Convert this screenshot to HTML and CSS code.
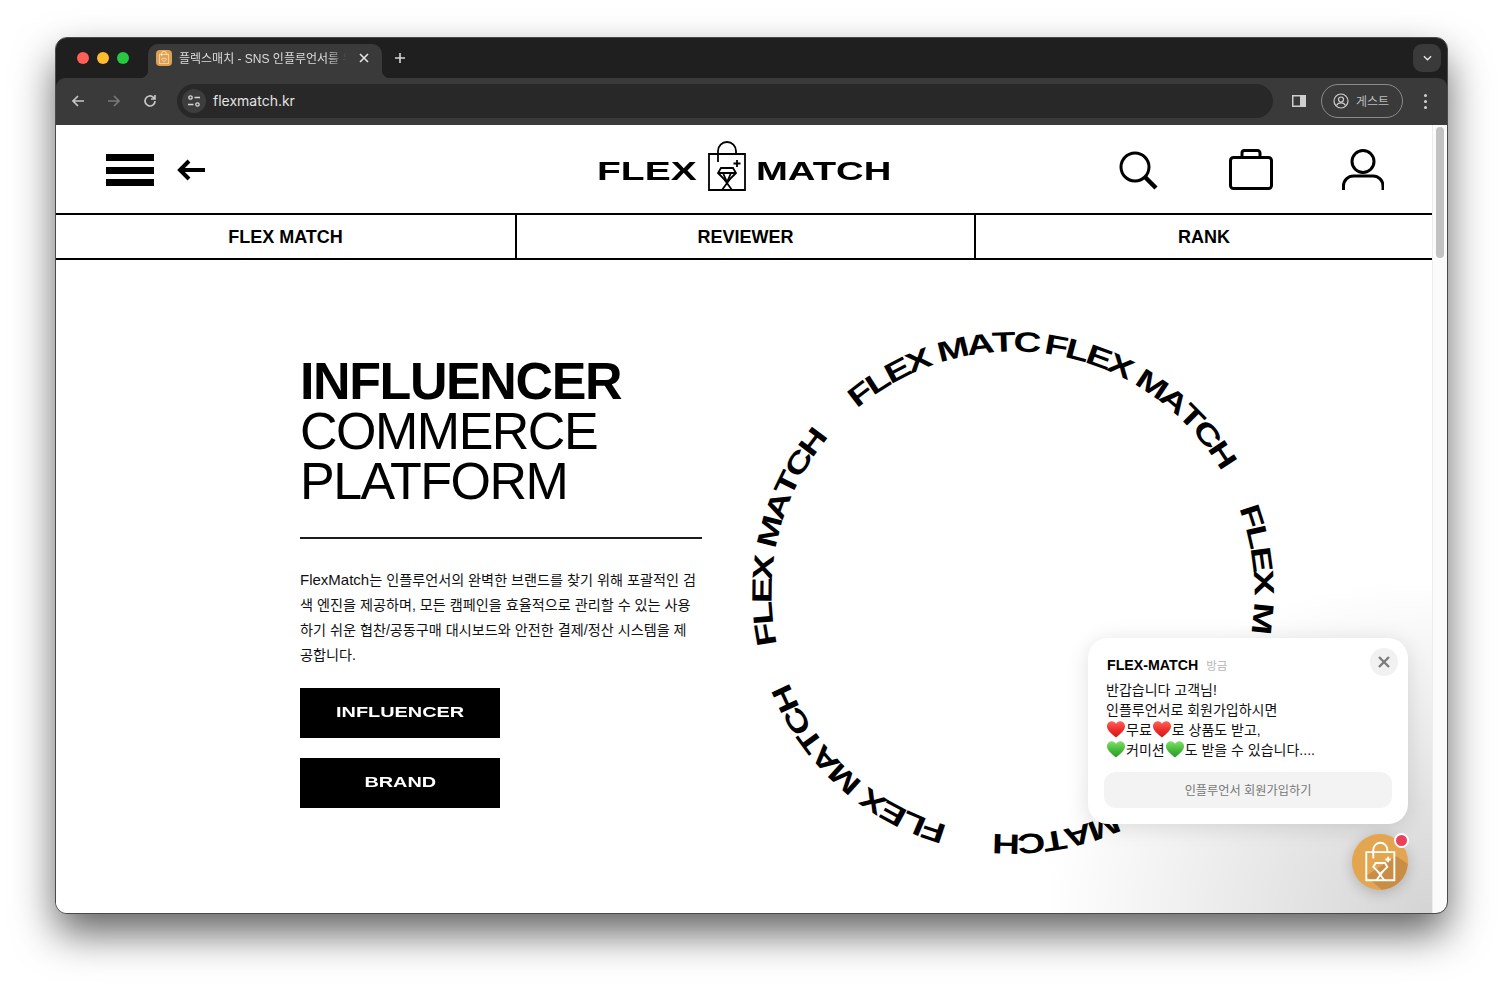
FILE: index.html
```html
<!DOCTYPE html>
<html lang="ko">
<head>
<meta charset="utf-8">
<title>FLEX MATCH</title>
<link rel="stylesheet" href="styles.css">
</head>
<body>
<svg class="defs" aria-hidden="true"><defs>
  <linearGradient id="heart-red" x1="0" y1="0" x2="0" y2="1"><stop offset="0" stop-color="#ff6257"/><stop offset=".55" stop-color="#ee2b2b"/><stop offset="1" stop-color="#c81e1e"/></linearGradient>
  <linearGradient id="heart-green" x1="0" y1="0" x2="0" y2="1"><stop offset="0" stop-color="#7ee06a"/><stop offset=".55" stop-color="#45b93a"/><stop offset="1" stop-color="#2c9a2c"/></linearGradient>
</defs></svg>
<div class="window">
  <div class="tabstrip">
    <div class="lights"><i class="light red"></i><i class="light yellow"></i><i class="light green"></i></div>
    <div class="tab">
      <span class="favicon">
        <svg viewBox="0 0 38 50" width="10" height="13" class="bag-white"><path d="M1 13H37V49H1Z"/><path d="M10 20V10a9 9 0 0 1 18 0V13"/><path d="M13 28H25L28 32 19 41 10 32Z"/></svg>
      </span>
      <span class="tab-title">플렉스매치 - SNS 인플루언서를 위한 플랫폼</span>
      <svg class="tab-close" viewBox="0 0 10 10" width="10" height="10"><path d="M1 1L9 9M9 1L1 9"/></svg>
    </div>
    <svg class="tab-plus" viewBox="0 0 12 12" width="12" height="12"><path d="M6 1V11M1 6H11"/></svg>
    <div class="tab-menu"><svg viewBox="0 0 10 6" width="9" height="6"><path d="M1 1L5 5 9 1"/></svg></div>
  </div>
  <div class="toolbar">
    <svg class="tool" viewBox="0 0 14 14" width="14" height="14"><path d="M13 7H2M7 2L2 7 7 12"/></svg>
    <svg class="tool dim" viewBox="0 0 14 14" width="14" height="14"><path d="M1 7H12M7 2L12 7 7 12"/></svg>
    <svg class="tool" viewBox="0 0 14 14" width="14" height="14"><path d="M12 7a5 5 0 1 1-1.6-3.7L12 5M12 1V5H8"/></svg>
    <div class="omnibox">
      <span class="site-icon">
        <svg viewBox="0 0 14 12" width="14" height="12"><circle cx="3.5" cy="2.5" r="1.7"/><path d="M7.5 2.5H13M1 9.5H6.5"/><circle cx="10.5" cy="9.5" r="1.7"/></svg>
      </span>
      <span class="url">flexmatch.kr</span>
    </div>
    <svg class="split" viewBox="0 0 14 12" width="14" height="12"><path class="split-frame" d="M0 0H14V12H0Z"/><path class="split-hole" d="M1.5 1.5H8V10.5H1.5Z"/></svg>
    <div class="guest">
      <svg viewBox="0 0 16 16" width="16" height="16"><circle cx="8" cy="8" r="7"/><circle cx="8" cy="6.5" r="2.5"/><path d="M3.5 12.5c1-2 2.5-2.6 4.5-2.6s3.500.6 4.500 2.600"/></svg>
      <span>게스트</span>
    </div>
    <div class="kebab"><i></i><i></i><i></i></div>
  </div>
  <div class="viewport">
    <div class="page">
      <header class="site-header">
        <div class="header-left">
          <div class="burger"><i></i><i></i><i></i></div>
          <svg class="back" viewBox="0 0 28 22" width="28" height="22"><path d="M28 11H4M12 2L3 11 12 20"/></svg>
        </div>
        <div class="logo">
          <span class="logo-word flex-word">FLEX</span>
          <svg class="logo-bag" viewBox="0 0 38 50" width="38" height="50">
            <path d="M1 13H37V49H1Z"/>
            <path d="M10 21V10a9 9 0 0 1 18 0V13"/>
            <path d="M13 27H25L28 32 19 41 10 32Z"/>
            <path d="M10 32H28M15 32L19 41 23 32M16 38L24 49M22 38L14 49M29 19V26M25.500 22.500H32.500"/>
          </svg>
          <span class="logo-word match-word">MATCH</span>
        </div>
        <div class="header-right">
          <svg class="hicon search" viewBox="0 0 40 40" width="40" height="40"><circle cx="17" cy="17" r="14"/><path d="M27 27L38 38" class="thick"/></svg>
          <svg class="hicon" viewBox="0 0 44 42" width="44" height="42"><rect x="1.500" y="8.500" width="41" height="31" rx="3"/><path d="M13 8V4a2.500 2.500 0 0 1 2.500-2.500h13A2.500 2.500 0 0 1 31 4V8"/></svg>
          <svg class="hicon" viewBox="0 0 42 42" width="42" height="42"><circle cx="21" cy="12.500" r="11"/><path d="M1.500 41V37a10 10 0 0 1 10-10H31a10 10 0 0 1 10 10V41"/></svg>
        </div>
      </header>
      <nav class="site-nav">
        <a class="nav-item">FLEX MATCH</a>
        <a class="nav-item">REVIEWER</a>
        <a class="nav-item">RANK</a>
      </nav>
      <main class="hero">
        <section class="intro">
          <h1 class="headline"><strong>INFLUENCER</strong><br>COMMERCE<br>PLATFORM</h1>
          <hr class="rule">
          <p class="lead"><span class="latin">FlexMatch</span>는 인플루언서의 완벽한 브랜드를 찾기 위해 포괄적인 검색 엔진을 제공하며, 모든 캠페인을 효율적으로 관리할 수 있는 사용하기 쉬운 협찬/공동구매 대시보드와 안전한 결제/정산 시스템을 제공합니다.</p>
          <a class="cta"><span>INFLUENCER</span></a>
          <a class="cta"><span>BRAND</span></a>
        </section>
        <svg class="ring" viewBox="-275 -275 550 550" width="550" height="550">
          <g transform="rotate(7.5)">
            <text transform="rotate(2.5) translate(0 -241.500) scale(1.38 1)">F</text><text transform="rotate(7.4) translate(0 -241.500) scale(1.38 1)">L</text><text transform="rotate(12.6) translate(0 -241.500) scale(1.38 1)">E</text><text transform="rotate(17.9) translate(0 -241.500) scale(1.38 1)">X</text><text transform="rotate(26.2) translate(0 -241.500) scale(1.38 1)">M</text><text transform="rotate(32.5) translate(0 -241.500) scale(1.38 1)">A</text><text transform="rotate(37.9) translate(0 -241.500) scale(1.38 1)">T</text><text transform="rotate(43.3) translate(0 -241.500) scale(1.38 1)">C</text><text transform="rotate(49.1) translate(0 -241.500) scale(1.38 1)">H</text>
          </g>
          <g transform="rotate(69.7)">
            <text transform="rotate(2.5) translate(0 -241.500) scale(1.38 1)">F</text><text transform="rotate(7.4) translate(0 -241.500) scale(1.38 1)">L</text><text transform="rotate(12.6) translate(0 -241.500) scale(1.38 1)">E</text><text transform="rotate(17.9) translate(0 -241.500) scale(1.38 1)">X</text><text transform="rotate(26.2) translate(0 -241.500) scale(1.38 1)">M</text>
          </g>
          <g transform="rotate(132.5)">
            <text transform="rotate(26.2) translate(0 -241.500) scale(1.38 1)">M</text><text transform="rotate(32.5) translate(0 -241.500) scale(1.38 1)">A</text><text transform="rotate(37.9) translate(0 -241.500) scale(1.38 1)">T</text><text transform="rotate(43.3) translate(0 -241.500) scale(1.38 1)">C</text><text transform="rotate(49.1) translate(0 -241.500) scale(1.38 1)">H</text>
          </g>
          <g transform="rotate(196)">
            <text transform="rotate(2.5) translate(0 -241.500) scale(1.38 1)">F</text><text transform="rotate(7.4) translate(0 -241.500) scale(1.38 1)">L</text><text transform="rotate(12.6) translate(0 -241.500) scale(1.38 1)">E</text><text transform="rotate(17.9) translate(0 -241.500) scale(1.38 1)">X</text><text transform="rotate(26.2) translate(0 -241.500) scale(1.38 1)">M</text><text transform="rotate(32.5) translate(0 -241.500) scale(1.38 1)">A</text><text transform="rotate(37.9) translate(0 -241.500) scale(1.38 1)">T</text><text transform="rotate(43.3) translate(0 -241.500) scale(1.38 1)">C</text><text transform="rotate(49.1) translate(0 -241.500) scale(1.38 1)">H</text>
          </g>
          <g transform="rotate(258)">
            <text transform="rotate(2.5) translate(0 -241.500) scale(1.38 1)">F</text><text transform="rotate(7.4) translate(0 -241.500) scale(1.38 1)">L</text><text transform="rotate(12.6) translate(0 -241.500) scale(1.38 1)">E</text><text transform="rotate(17.9) translate(0 -241.500) scale(1.38 1)">X</text><text transform="rotate(26.2) translate(0 -241.500) scale(1.38 1)">M</text><text transform="rotate(32.5) translate(0 -241.500) scale(1.38 1)">A</text><text transform="rotate(37.9) translate(0 -241.500) scale(1.38 1)">T</text><text transform="rotate(43.3) translate(0 -241.500) scale(1.38 1)">C</text><text transform="rotate(49.1) translate(0 -241.500) scale(1.38 1)">H</text>
          </g>
          <g transform="rotate(320)">
            <text transform="rotate(2.5) translate(0 -241.500) scale(1.38 1)">F</text><text transform="rotate(7.4) translate(0 -241.500) scale(1.38 1)">L</text><text transform="rotate(12.6) translate(0 -241.500) scale(1.38 1)">E</text><text transform="rotate(17.9) translate(0 -241.500) scale(1.38 1)">X</text><text transform="rotate(26.2) translate(0 -241.500) scale(1.38 1)">M</text><text transform="rotate(32.5) translate(0 -241.500) scale(1.38 1)">A</text><text transform="rotate(37.9) translate(0 -241.500) scale(1.38 1)">T</text><text transform="rotate(43.3) translate(0 -241.500) scale(1.38 1)">C</text>
          </g>
        </svg>
      </main>
      <div class="chat-glow"></div>
      <aside class="chat-card">
        <div class="chat-head"><b>FLEX-MATCH</b><span>방금</span></div>
        <button class="chat-close"><svg viewBox="0 0 12 12" width="12" height="12"><path d="M1 1L11 11M11 1L1 11"/></svg></button>
        <p class="chat-body">반갑습니다 고객님!<br>인플루언서로 회원가입하시면<br><svg class="heart" viewBox="0 0 24 22"><path fill="url(#heart-red)" d="M12 21.500C5 16 0 11.500 0 6.500 0 3 2.800 0 6.500 0 8.800 0 10.800 1.200 12 3.200 13.200 1.200 15.200 0 17.500 0 21.200 0 24 3 24 6.500 24 11.500 19 16 12 21.500Z"/></svg>무료<svg class="heart" viewBox="0 0 24 22"><path fill="url(#heart-red)" d="M12 21.500C5 16 0 11.500 0 6.500 0 3 2.800 0 6.500 0 8.800 0 10.800 1.200 12 3.200 13.200 1.200 15.200 0 17.500 0 21.200 0 24 3 24 6.500 24 11.500 19 16 12 21.500Z"/></svg>로 상품도 받고,<br><svg class="heart" viewBox="0 0 24 22"><path fill="url(#heart-green)" d="M12 21.500C5 16 0 11.500 0 6.500 0 3 2.800 0 6.500 0 8.800 0 10.800 1.200 12 3.200 13.200 1.200 15.200 0 17.500 0 21.200 0 24 3 24 6.500 24 11.500 19 16 12 21.500Z"/></svg>커미션<svg class="heart" viewBox="0 0 24 22"><path fill="url(#heart-green)" d="M12 21.500C5 16 0 11.500 0 6.500 0 3 2.800 0 6.500 0 8.800 0 10.800 1.200 12 3.200 13.200 1.200 15.200 0 17.500 0 21.200 0 24 3 24 6.500 24 11.500 19 16 12 21.500Z"/></svg>도 받을 수 있습니다....</p>
        <div class="chat-action">인플루언서 회원가입하기</div>
      </aside>
      <div class="fab">
        <svg class="fab-art" viewBox="0 0 56 56" width="56" height="56">
          <path class="fab-shadow" d="M44 22L56 30A28 28 0 0 1 30 56L14 42Z"/>
          <g class="bag-white" transform="translate(13.500 8) scale(0.78)">
            <path d="M1 13H37V49H1Z"/><path d="M10 21V10a9 9 0 0 1 18 0V13"/><path d="M13 27H25L28 32 19 41 10 32Z"/><path d="M16 38L24 49M22 38L14 49M29 19V26M25.500 22.500H32.500"/>
          </g>
        </svg>
        <i class="fab-dot"></i>
      </div>
    </div>
    <div class="scrollbar"><i></i></div>
  </div>
</div>
</body>
</html>
```
FILE: styles.css
```css
* { box-sizing: border-box; }
html, body { margin: 0; height: 100%; background: #fff; overflow: hidden; }
body { padding: 38px 56px 74px 56px; font-family: "Liberation Sans", "Noto Sans CJK KR", sans-serif; color: #000; }
.defs { position: absolute; width: 0; height: 0; }

.window {
  width: 1391px; height: 875px; border-radius: 11px; overflow: hidden;
  display: flex; flex-direction: column; background: #1f1f1f;
  outline: 1px solid #4a4a4a;
  box-shadow: 0 20px 42px rgba(0,0,0,.62);
}
.tabstrip { height: 40px; flex: none; display: flex; align-items: flex-start; background: #1f1f1f; padding-left: 21px; }
.lights { display: flex; gap: 8px; padding-top: 14px; width: 71px; }
.light { width: 12px; height: 12px; border-radius: 50%; }
.red { background: #ff5f57; } .yellow { background: #febc2e; } .green { background: #28c840; }
.tab {
  margin-top: 6px; width: 234px; height: 34px; background: #3a3a3a; border-radius: 10px 10px 0 0;
  display: flex; align-items: center; padding: 0 13px 7px 8px; position: relative;
}
.tab::before, .tab::after { content: ""; position: absolute; bottom: 0; width: 8px; height: 8px; }
.tab::before { left: -8px; background: radial-gradient(circle at 0 0, transparent 8px, #3a3a3a 8.5px); }
.tab::after { right: -8px; background: radial-gradient(circle at 100% 0, transparent 8px, #3a3a3a 8.5px); }
.favicon { width: 16px; height: 16px; border-radius: 4px; background: #dfa04f; display: flex; align-items: center; justify-content: center; flex: none; }
.bag-white path, .bag-white { fill: none; stroke: #fff; stroke-width: 2.400; }
.tab-title {
  flex: 1; margin-left: 7px; padding-top: 2px; min-width: 0; font-size: 12px; line-height: 16px; color: #dcdcdc; white-space: nowrap; overflow: hidden;
  -webkit-mask-image: linear-gradient(90deg, #000 88%, transparent 100%); mask-image: linear-gradient(90deg, #000 88%, transparent 100%);
  margin-right: 12px;
}
.tab-close path { fill: none; stroke: #e4e4e4; stroke-width: 1.600; }
.tab-plus { margin: 14px 0 0 12px; }
.tab-plus path { fill: none; stroke: #d8d8d8; stroke-width: 1.600; }
.tab-menu { margin: 6px 6px 0 auto; width: 28px; height: 28px; border-radius: 9px; background: #3a3a3a; display: flex; align-items: center; justify-content: center; }
.tab-menu path { fill: none; stroke: #e8e8e8; stroke-width: 1.500; }

.toolbar { height: 47px; flex: none; background: #3a3a3a; border-radius: 9px 9px 0 0; display: flex; align-items: center; padding: 0 0 1px 15px; }
.tool { margin-right: 22px; }
.tool path { fill: none; stroke: #c6c6c6; stroke-width: 1.700; }
.tool.dim path { stroke: #787878; }
.omnibox { margin-left: -2px; width: 1096px; height: 34px; border-radius: 17px; background: #282828; display: flex; align-items: center; padding-left: 5px; }
.site-icon { width: 24px; height: 24px; border-radius: 50%; background: #3d3d3d; display: flex; align-items: center; justify-content: center; }
.site-icon svg * { fill: none; stroke: #d6d6d6; stroke-width: 1.300; }
.url { margin-left: 7px; padding-bottom: 1px; font-size: 14px; color: #e3e3e3; font-family: "Inter", "Liberation Sans", sans-serif; }
.split { margin-left: 19px; }
.split-frame { fill: #cfcfcf; } .split-hole { fill: #3a3a3a; }
.guest { margin-left: 15px; width: 82px; height: 34px; border: 1px solid #8a8a8a; border-radius: 17px; display: flex; align-items: center; gap: 7px; padding-left: 11px; }
.guest svg * { fill: none; stroke: #cfcfcf; stroke-width: 1.200; }
.guest span { font-size: 12px; color: #bdbdbd; padding-bottom: 1px; }
.kebab { margin-left: 21px; display: flex; flex-direction: column; gap: 3px; }
.kebab i { width: 3px; height: 3px; border-radius: 50%; background: #cfcfcf; display: block; }

.viewport { flex: 1; min-height: 0; display: flex; background: #fff; }
.page { width: 1376px; flex: none; position: relative; overflow: hidden; background: #fff; }
.scrollbar { flex: 1; background: #fbfbfb; border-left: 1px solid #ececec; padding: 2px 3px 0 3px; }
.scrollbar i { display: block; height: 131px; width: 8px; border-radius: 4px; background: #c2c2c2; }

.site-header { height: 88px; display: grid; grid-template-columns: 1fr auto 1fr; align-items: center; padding: 0 48px 0 50px; }
.header-left { display: flex; align-items: center; gap: 23px; padding-top: 2px; }
.burger { width: 48px; display: flex; flex-direction: column; gap: 5.500px; }
.burger i { display: block; height: 7px; background: #000; }
.back path { fill: none; stroke: #000; stroke-width: 4; }
.logo { display: flex; align-items: center; gap: 11px; height: 50px; margin: 3px 0 0 -4px; }
.logo-word { display: block; font-weight: 700; font-size: 25px; line-height: 30px; transform-origin: left center; white-space: nowrap; }
.flex-word { width: 99px; transform: scaleX(1.56); }
.match-word { width: 133px; transform: scaleX(1.53); }
.logo-bag { margin: 0 -1px 10px 1px; }
.logo-bag path { fill: none; stroke: #000; stroke-width: 1.800; }
.header-right { display: flex; justify-content: flex-end; align-items: center; gap: 69px; padding-top: 2px; }
.hicon * { fill: none; stroke: #000; stroke-width: 3; }
.hicon .thick { stroke-width: 4.500; }
.hicon.search { margin-right: 2px; }

.site-nav { height: 47px; display: grid; grid-template-columns: 459px 459px 1fr; border-top: 2px solid #000; border-bottom: 2px solid #000; }
.nav-item { display: flex; align-items: center; justify-content: center; font-size: 18px; font-weight: 700; padding-top: 2px; }
.nav-item + .nav-item { border-left: 2px solid #000; }

.hero { display: flex; gap: 36px; padding: 58px 0 0 244px; align-items: flex-start; }
.intro { width: 402px; flex: none; padding-top: 38px; }
.headline { margin: 0; font-size: 52px; line-height: 50px; font-weight: 400; letter-spacing: -1.5px; }
.headline strong { font-weight: 700; letter-spacing: -1.4px; }
.rule { margin: 31px 0 0; height: 2px; border: 0; background: #1c1c1c; }
.lead { margin: 29px 0 0; width: 398px; font-size: 14.150px; line-height: 25px; word-break: break-all; color: #111; }
.latin { font-size: 15px; line-height: 20px; }
.cta { display: flex; justify-content: center; align-items: center; width: 200px; height: 50px; margin-top: 20px; background: #000; color: #fff; font-weight: 700; font-size: 14px; padding-bottom: 3px; }
.cta + .cta { margin-top: 20px; }
.cta span { display: block; transform: scaleX(1.420); }
.ring { flex: none; overflow: visible; }
.ring text { font-size: 28px; font-weight: 700; text-anchor: middle; fill: #000; }

.chat-glow { position: absolute; right: 0; bottom: 0; width: 380px; height: 330px; background: radial-gradient(ellipse at 100% 100%, rgba(0,0,0,.17) 0%, rgba(0,0,0,.05) 50%, transparent 72%); pointer-events: none; }
.chat-card { position: absolute; left: 1032px; top: 513px; width: 320px; height: 186px; border-radius: 20px; background: #fff; box-shadow: 0 3px 22px rgba(0,0,0,.12); padding: 17px 16px 0 18px; }
.chat-head { display: flex; align-items: baseline; gap: 8px; padding-left: 1px; line-height: 20px; }
.chat-head b { font-size: 14.200px; font-weight: 700; }
.chat-head span { font-size: 11.500px; color: #b5b5b5; }
.chat-close { position: absolute; right: 10px; top: 10px; width: 28px; height: 28px; border: 0; border-radius: 50%; background: #f1f1f1; padding: 0; display: flex; align-items: center; justify-content: center; }
.chat-close path { fill: none; stroke: #7c7c7c; stroke-width: 2.400; }
.chat-body { margin: 4px 0 0; font-size: 14px; line-height: 20px; color: #111; letter-spacing: 0; }
.heart { width: 18px; height: 17px; vertical-align: -3px; margin: 0 1px; }
.chat-action { margin: 12px 0 0 -2px; height: 36px; border-radius: 12px; background: #f3f3f3; color: #777; font-size: 12.200px; display: flex; align-items: center; justify-content: center; }
.fab { position: absolute; left: 1296px; top: 709px; width: 56px; height: 56px; border-radius: 50%; background: #e3a54f; box-shadow: 0 3px 14px rgba(0,0,0,.2); }
.fab-art { display: block; border-radius: 50%; overflow: hidden; }
.fab-shadow { fill: #c98d45; }
.fab-dot { position: absolute; right: -1px; top: -1px; width: 15px; height: 15px; border-radius: 50%; background: #ea4158; border: 2px solid #fff; }
```
